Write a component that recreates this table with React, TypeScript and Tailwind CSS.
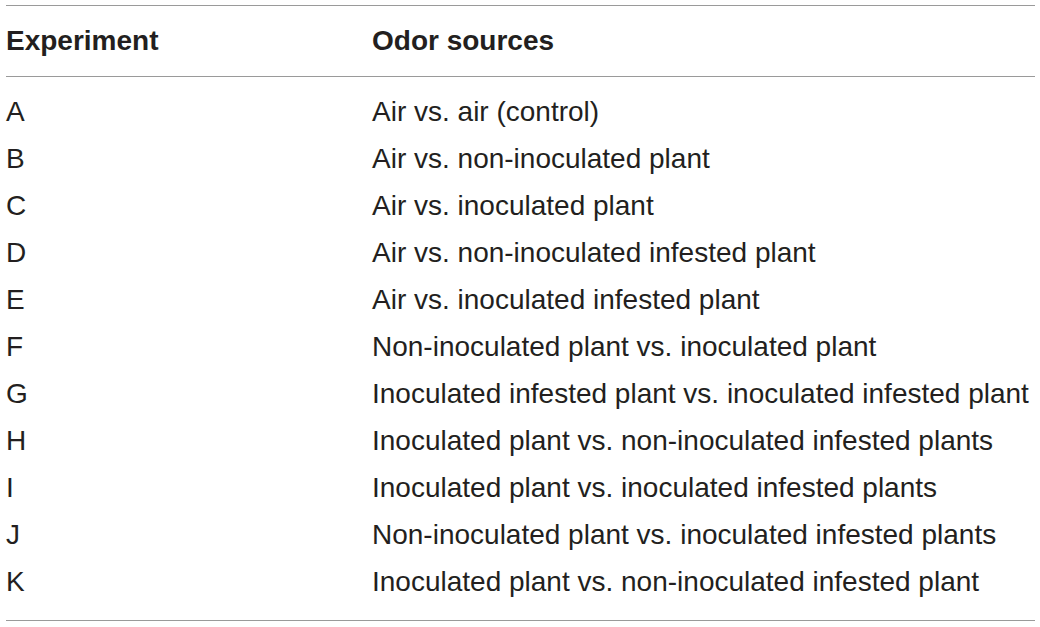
const rows: [string, string][] = [
  ['A', 'Air vs. air (control)'],
  ['B', 'Air vs. non-inoculated plant'],
  ['C', 'Air vs. inoculated plant'],
  ['D', 'Air vs. non-inoculated infested plant'],
  ['E', 'Air vs. inoculated infested plant'],
  ['F', 'Non-inoculated plant vs. inoculated plant'],
  ['G', 'Inoculated infested plant vs. inoculated infested plant'],
  ['H', 'Inoculated plant vs. non-inoculated infested plants'],
  ['I', 'Inoculated plant vs. inoculated infested plants'],
  ['J', 'Non-inoculated plant vs. inoculated infested plants'],
  ['K', 'Inoculated plant vs. non-inoculated infested plant'],
];

const App = () => {
  return (
    <div
      className="w-[1040px] h-[627px] bg-white pt-[5px] pl-[6px] pr-[5px] text-[#231f20]"
      style={{ fontFamily: '"Liberation Sans", Arial, sans-serif' }}
    >
      <div className="border-t border-b border-[#9a9a9a]">
        <div className="flex h-[71px] items-center border-b border-[#9a9a9a] text-[28px] font-bold">
          <div className="w-[366px]">Experiment</div>
          <div>Odor sources</div>
        </div>
        <div className="pt-[11px] pb-[15px]">
          {rows.map(([exp, odor]) => (
            <div key={exp} className="flex h-[47px] items-center text-[28px] font-light">
              <div className="w-[366px]">{exp}</div>
              <div className="whitespace-nowrap">{odor}</div>
            </div>
          ))}
        </div>
      </div>
    </div>
  );
};

export default App;
